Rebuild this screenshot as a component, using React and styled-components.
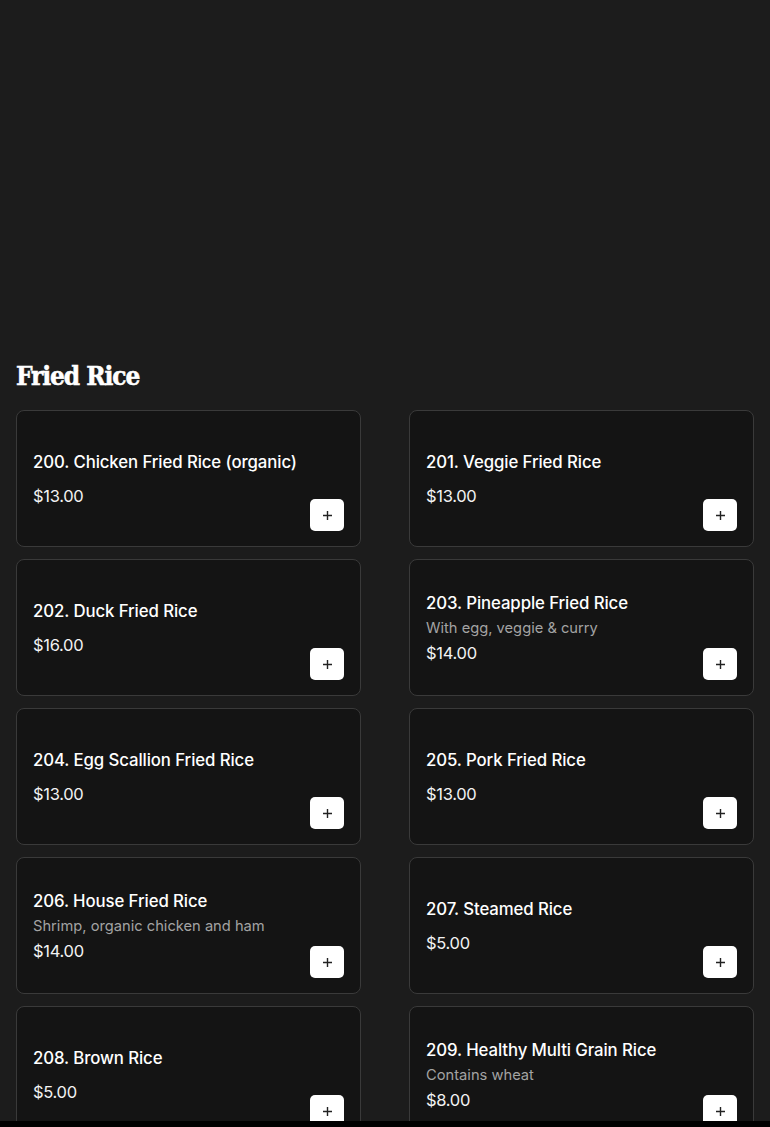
import React from "react";
import styled, { createGlobalStyle } from "styled-components";

const Global = createGlobalStyle`
  html, body { margin: 0; padding: 0; background: #1c1c1c; }
  body { font-family: "Inter", "Liberation Sans", sans-serif; color: #fff; }
  * { box-sizing: border-box; }
`;

const Page = styled.div`
  min-height: 1127px;
  background: #1c1c1c;
  padding: 0 16px 40px;
`;

const Hero = styled.div`
  height: 358px;
`;

const Heading = styled.h2`
  margin: 0 0 16px;
  font-family: "DejaVu Serif Condensed", "DejaVu Serif", "Liberation Serif", serif;
  font-stretch: condensed;
  font-weight: 900;
  font-size: 26px;
  line-height: 36px;
  letter-spacing: -1.1px;
  -webkit-text-stroke: 0.5px #fff;
  color: #fff;
`;

const Grid = styled.div`
  display: grid;
  grid-template-columns: 345px 345px;
  column-gap: 48px;
  row-gap: 12px;
`;

const Card = styled.div`
  height: 137px;
  background: #141414;
  border: 1px solid #3a3a3a;
  border-radius: 8px;
  padding: 0 16px 15px 16px;
  display: flex;
  align-items: center;
`;

const Info = styled.div`
  flex: 1;
  display: flex;
  flex-direction: column;
  padding-top: 16px;
`;

const Title = styled.div`
  font-size: 16.8px;
  line-height: 26px;
  font-weight: 500;
  color: #fff;
  letter-spacing: -0.1px;
`;

const Desc = styled.div`
  font-size: 14.7px;
  line-height: 22px;
  color: #a3a3a3;
  margin-top: 1px;
  margin-bottom: 1px;
`;

const Price = styled.div`
  font-size: 16.5px;
  line-height: 26px;
  font-weight: 400;
  color: #f2f2f2;
  margin-top: ${(p) => (p.$tight ? "0" : "8px")};
  letter-spacing: -0.3px;
`;

const AddButton = styled.button`
  align-self: flex-end;
  width: 34px;
  height: 32px;
  border: none;
  border-radius: 5px;
  background: #fff;
  display: flex;
  align-items: center;
  justify-content: center;
  padding: 0;
  cursor: pointer;
  flex-shrink: 0;
`;

const BottomBar = styled.div`
  position: fixed;
  left: 0;
  right: 0;
  bottom: 0;
  height: 6px;
  background: #000;
`;

const items = [
  { t: "200. Chicken Fried Rice (organic)", p: "$13.00" },
  { t: "201. Veggie Fried Rice", p: "$13.00" },
  { t: "202. Duck Fried Rice", p: "$16.00" },
  { t: "203. Pineapple Fried Rice", d: "With egg, veggie & curry", p: "$14.00" },
  { t: "204. Egg Scallion Fried Rice", p: "$13.00" },
  { t: "205. Pork Fried Rice", p: "$13.00" },
  { t: "206. House Fried Rice", d: "Shrimp, organic chicken and ham", p: "$14.00" },
  { t: "207. Steamed Rice", p: "$5.00" },
  { t: "208. Brown Rice", p: "$5.00" },
  { t: "209. Healthy Multi Grain Rice", d: "Contains wheat", p: "$8.00" },
];

const Plus = () => (
  <svg width="11" height="11" viewBox="0 0 11 11">
    <path d="M5.5 1v9M1 5.5h9" stroke="#222" strokeWidth="1.4" />
  </svg>
);

export default function App() {
  return (
    <Page>
      <Global />
      <Hero />
      <Heading>Fried Rice</Heading>
      <Grid>
        {items.map((it) => (
          <Card key={it.t}>
            <Info>
              <Title>{it.t}</Title>
              {it.d && <Desc>{it.d}</Desc>}
              <Price $tight={!!it.d}>{it.p}</Price>
            </Info>
            <AddButton aria-label="Add">
              <Plus />
            </AddButton>
          </Card>
        ))}
      </Grid>
      <BottomBar />
    </Page>
  );
}
